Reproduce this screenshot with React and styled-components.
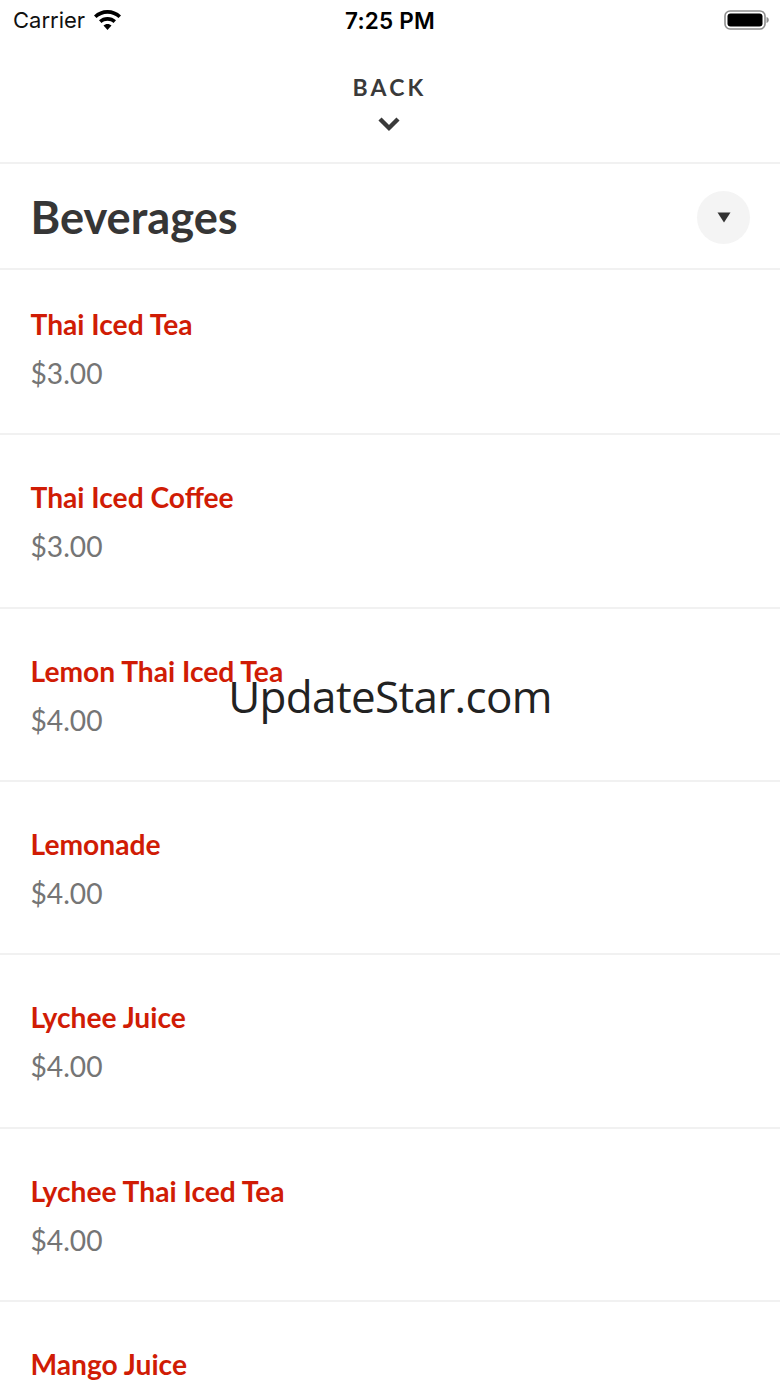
import React from 'react';
import styled, { createGlobalStyle } from 'styled-components';

const Global = createGlobalStyle`
  html, body { margin: 0; padding: 0; background: #fff; }
  body { font-family: Lato, "Liberation Sans", sans-serif; }
`;
const Page = styled.div`
  position: relative; width: 780px; height: 1387px; overflow: hidden; background: #fff;
`;
const StatusBar = styled.div`
  height: 40px; display: grid; grid-template-columns: 1fr auto 1fr; align-items: center;
  padding: 0 13px; box-sizing: border-box; color: #000;
  font-family: Inter, "Liberation Sans", sans-serif;
`;
const StatusLeft = styled.div`
  display: flex; align-items: center; gap: 8px; font-size: 22px; color: #111;
`;
const Clock = styled.div`
  font-size: 22.5px; font-weight: 600; letter-spacing: 0.2px;
`;
const StatusRight = styled.div`
  display: flex; justify-content: flex-end; margin-right: -2px;
`;
const BackBar = styled.div`
  height: 124px; box-sizing: border-box; padding: 34px 2px 0 0; display: flex; flex-direction: column;
  align-items: center; gap: 15px; border-bottom: 2px solid #f1f1f1;
`;
const BackLabel = styled.div`
  font-size: 23px; line-height: 27px; font-weight: 700; letter-spacing: 3.2px; color: #3a3a3a; margin-right: -1px;
`;
const SectionHeader = styled.div`
  height: 106px; box-sizing: border-box; display: flex; align-items: center; justify-content: space-between;
  padding: 0 30px 0 30.5px; border-bottom: 2px solid #f1f1f1;
`;
const SectionTitle = styled.h1`
  margin: 2px 0 0; font-size: 45.2px; line-height: 54px; font-weight: 700; color: #363636;
`;
const Toggle = styled.div`
  width: 53px; height: 53px; border-radius: 50%; background: #f4f4f4; display: flex; align-items: center;
  justify-content: center; margin-top: 2px;
`;
const Row = styled.div`
  height: 173.33px; box-sizing: border-box; padding: 45px 30.5px 0; border-bottom: 2px solid #f1f1f1;
  &:first-of-type { height: 165.33px; padding-top: 37px; }
`;
const ItemName = styled.div`
  font-size: 28.2px; line-height: 35px; font-weight: 700; color: #d01c05;
`;
const ItemPrice = styled.div`
  font-size: 28.2px; line-height: 35px; margin-top: 14px; color: #757575;
`;
const Watermark = styled.div`
  position: absolute; left: 0; right: 0; top: 668px; text-align: center; font-family: "Open Sans", "Noto Sans", sans-serif;
  font-size: 44px; letter-spacing: -0.65px; line-height: 56px; color: #222;
`;
const Rows = styled.div``;

const items = [
  ['Thai Iced Tea', '$3.00'],
  ['Thai Iced Coffee', '$3.00'],
  ['Lemon Thai Iced Tea', '$4.00'],
  ['Lemonade', '$4.00'],
  ['Lychee Juice', '$4.00'],
  ['Lychee Thai Iced Tea', '$4.00'],
  ['Mango Juice', ''],
];

const Wifi = () => (
  <svg width="29" height="22" viewBox="0 0 29 22">
    <path d="M14.5 1C9.3 1 4.7 3 1 6.4l2.5 2.7C6.4 6.4 10.3 4.8 14.5 4.8s8.1 1.6 11 4.3L28 6.4C24.3 3 19.7 1 14.5 1z" fill="#000" />
    <path d="M14.5 8C11.2 8 8.3 9.2 6 11.3l2.5 2.7c1.6-1.4 3.7-2.3 6-2.3s4.4.9 6 2.3l2.5-2.7C20.7 9.2 17.8 8 14.5 8z" fill="#000" />
    <path d="M14.5 15c-1.6 0-3 .6-4 1.5l4 4.4 4-4.4c-1-.9-2.4-1.5-4-1.5z" fill="#000" />
  </svg>
);
const Battery = () => (
  <svg width="45" height="20" viewBox="0 0 45 20">
    <rect x="1" y="1" width="40" height="18" rx="5" fill="none" stroke="#8e8e8e" strokeWidth="1.6" />
    <rect x="3.5" y="3.5" width="35" height="13" rx="3" fill="#000" />
    <path d="M42.5 7c1.5.4 2.3 1.6 2.3 3s-.8 2.6-2.3 3z" fill="#8e8e8e" />
  </svg>
);
const Chevron = () => (
  <svg width="24" height="16" viewBox="0 0 24 16">
    <path d="M3 3l9 9 9-9" fill="none" stroke="#3a3a3a" strokeWidth="4.4" />
  </svg>
);
const Caret = () => (
  <svg width="14" height="11" viewBox="0 0 14 11"><path d="M0.5 0.5h13L7 10.5z" fill="#333" /></svg>
);

export default function App() {
  return (
    <Page>
      <Global />
      <StatusBar>
        <StatusLeft>Carrier <Wifi /></StatusLeft>
        <Clock>7:25 PM</Clock>
        <StatusRight><Battery /></StatusRight>
      </StatusBar>
      <BackBar>
        <BackLabel>BACK</BackLabel>
        <Chevron />
      </BackBar>
      <SectionHeader>
        <SectionTitle>Beverages</SectionTitle>
        <Toggle><Caret /></Toggle>
      </SectionHeader>
      <Rows>
        {items.map(([name, price]) => (
          <Row key={name}>
            <ItemName>{name}</ItemName>
            <ItemPrice>{price}</ItemPrice>
          </Row>
        ))}
      </Rows>
      <Watermark>UpdateStar.com</Watermark>
    </Page>
  );
}
